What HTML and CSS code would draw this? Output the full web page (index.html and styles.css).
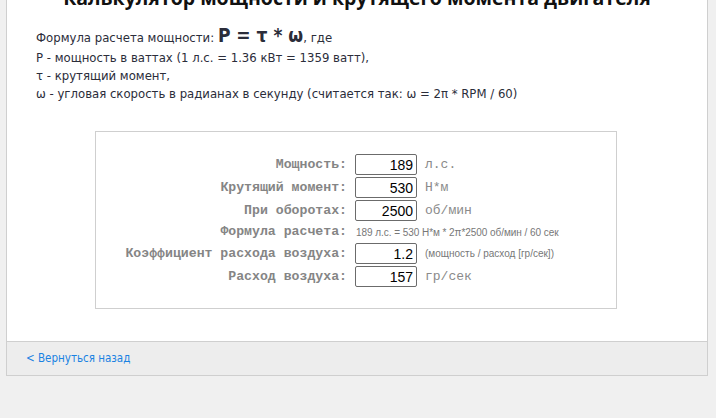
FILE: index.html
```html
<!DOCTYPE html>
<html lang="ru">

<head>
    <meta charset="UTF-8">
    <title>Калькулятор мощности и крутящего момента двигателя</title>
    <link rel="stylesheet" href="styles.css">
</head>

<body>
    <div class="page">
        <div class="content">
            <h1 class="title">Калькулятор мощности и крутящего момента двигателя</h1>

            <!-- Formula description -->
            <div class="intro">
                <p class="intro-first">Формула расчета мощности: <b class="big">P = τ * ω</b>, где</p>
                <p>P - мощность в ваттах (1 л.с. = 1.36 кВт = 1359 ватт),</p>
                <p>τ - крутящий момент,</p>
                <p>ω - угловая скорость в радианах в секунду (считается так: ω = 2π * RPM / 60)</p>
            </div>

            <!-- Calculator form -->
            <div class="calc">
                <div class="calc-grid">
                    <label class="lbl">Мощность:</label>
                    <input class="num" type="text" value="189">
                    <span class="unit">л.с.</span>

                    <label class="lbl">Крутящий момент:</label>
                    <input class="num" type="text" value="530">
                    <span class="unit">Н*м</span>

                    <label class="lbl">При оборотах:</label>
                    <input class="num" type="text" value="2500">
                    <span class="unit">об/мин</span>

                    <label class="lbl lbl-small">Формула расчета:</label>
                    <span class="note note-wide">189 л.с. = 530 Н*м * 2π*2500 об/мин / 60 сек</span>

                    <label class="lbl">Коэффициент расхода воздуха:</label>
                    <input class="num" type="text" value="1.2">
                    <span class="note">(мощность / расход [гр/сек])</span>

                    <label class="lbl">Расход воздуха:</label>
                    <input class="num" type="text" value="157">
                    <span class="unit">гр/сек</span>
                </div>
            </div>
        </div>

        <!-- Footer with back link -->
        <div class="footer">
            <a href="#" class="back">&lt; Вернуться назад</a>
        </div>
    </div>
</body>

</html>
```

FILE: styles.css
```css
/* Page background */
body {
    margin: 0;
    background: #f0f0f0;
    font-family: "DejaVu Sans Condensed", "DejaVu Sans", sans-serif;
    font-size: 13px;
    color: #2b2d3a;
}

/* White sheet with the calculator */
.page {
    margin: -17px 0 0 6px;
    width: 700px;
    background: #fff;
    border: 1px solid #cfcfcf;
}

.content {
    padding: 0 0 32px 0;
}

.title {
    margin: 0;
    text-align: center;
    font-family: "Open Sans", sans-serif;
    font-size: 19.5px;
    line-height: 28px;
    font-weight: bold;
    color: #111;
}

.intro {
    margin: 12px 0 0 29px;
}

.intro p {
    margin: 0;
    line-height: 18px;
}

.intro .intro-first {
    line-height: 22px;
}

.big {
    font-size: 19px;
}

/* Form box */
.calc {
    margin: 28px 0 0 88px;
    width: 520px;
    border: 1px solid #cfcfcf;
    padding: 22px 0 21px 0;
}

.calc-grid {
    display: grid;
    grid-template-columns: 252px 62px 1fr;
    column-gap: 7px;
    row-gap: 2px;
    align-items: center;
}

.lbl {
    text-align: right;
    font-family: "Liberation Mono", monospace;
    font-size: 13.2px;
    font-weight: bold;
    color: #858585;
    padding-right: 1px;
}

.lbl-small {
    line-height: 18px;
}

.num {
    box-sizing: border-box;
    width: 62px;
    height: 21px;
    margin: 0;
    padding: 0 3px;
    border: 1px solid #6b6b6b;
    border-radius: 2px;
    text-align: right;
    font-family: "Liberation Sans", sans-serif;
    font-size: 14px;
    color: #000;
}

.unit {
    font-family: "Liberation Mono", monospace;
    font-size: 13px;
    color: #8a8a8a;
    padding-left: 1px;
}

.note {
    font-family: "Liberation Sans", sans-serif;
    font-size: 10px;
    color: #777;
    padding-left: 1px;
}

.note-wide {
    grid-column: 2 / 4;
    letter-spacing: -0.05px;
}

/* Footer */
.footer {
    background: #ededed;
    border-top: 1px solid #cfcfcf;
    padding: 0 19px;
    height: 33px;
    line-height: 32px;
}

.back {
    font-size: 11.5px;
    color: #1a82e2;
    text-decoration: none;
}
```
